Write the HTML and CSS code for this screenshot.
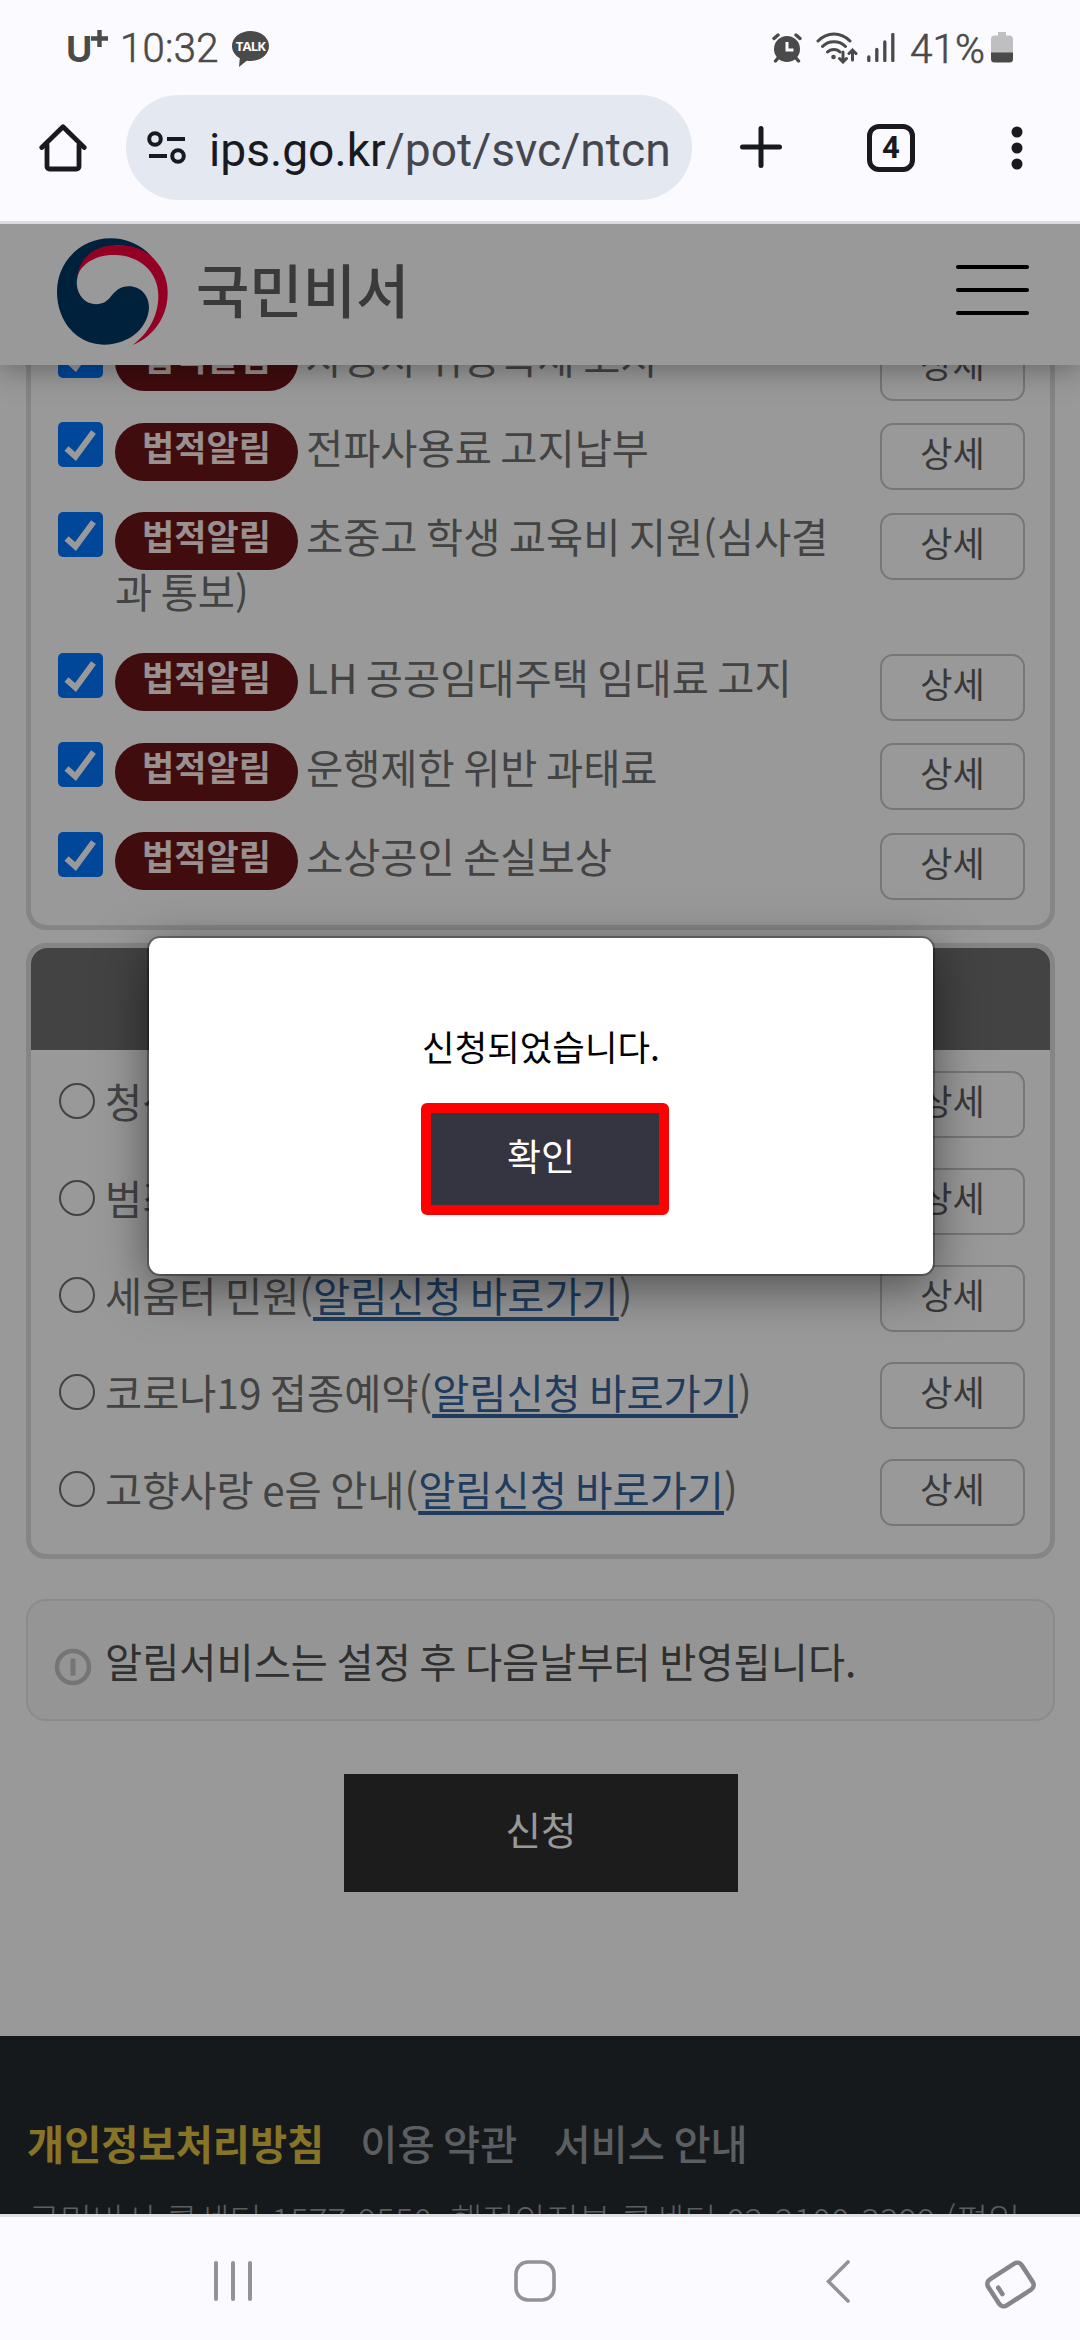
FILE: index.html
```html
<!DOCTYPE html>
<html lang="ko">
<head>
<meta charset="utf-8">
<title>국민비서</title>
<link rel="stylesheet" href="styles.css">
</head>
<body>
<div class="status">
  <span class="carrier">U</span>
  <svg class="carrier-plus" width="17" height="17" viewBox="0 0 17 17"><path d="M8.5 0V17M0 8.5H17" stroke="#4a4a4a" stroke-width="4.4"/></svg>
  <span class="clock">10:32</span>
  <span class="talk">
    <svg width="37" height="36" viewBox="0 0 37 36"><path d="M18.5 0C28.7 0 37 6.6 37 15s-8.3 15-18.500 15c-1.300 0-2.600-.1-3.800-.3L7 36l.8-8.700C3.100 24.600 0 20.100 0 15 0 6.600 8.300 0 18.500 0Z" fill="#4a4a4a"/></svg>
    <b>TALK</b>
  </span>
  <div class="status-right">
    <svg class="alarm" width="30" height="30" viewBox="0 0 30 30"><g fill="none" stroke="#4a4a4a" stroke-width="3.400" stroke-linecap="round"><path d="M2 5.500L6 2M28 5.500L24 2M6 25L3.500 28M24 25L26.500 28"/></g><circle cx="15" cy="16" r="13" fill="#4a4a4a"/><path d="M15 9V17H21.500" fill="none" stroke="#fafaff" stroke-width="3"/></svg>
    <svg class="wifi" width="42" height="32" viewBox="0 0 42 32"><g fill="none" stroke="#4a4a4a" stroke-width="3" stroke-linecap="round"><path d="M2 9C11-.5 25-.5 34 9M6.500 14.500C12.500 8 23.500 8 29.500 14.500M11.500 20C15 16.500 21 16.500 24 20"/><path d="M27 20V29.500M23.500 26.500L27 30L30.500 26.500M36.500 28V19M33 21.500L36.500 18L40 21.500"/></g><circle cx="17.500" cy="25" r="2.300" fill="#4a4a4a"/></svg>
    <svg class="signal" width="28" height="29" viewBox="0 0 28 29"><path d="M1.800 24V27.500M9.800 16.500V27.500M17.800 9V27.500M25.800 1.500V27.500" stroke="#4a4a4a" stroke-width="3.300" stroke-linecap="round"/></svg>
    <span class="percent">41%</span>
    <svg class="battery" width="22" height="31" viewBox="0 0 22 31"><path d="M7 0h8v3.500h3.500A3.500 3.500 0 0 1 22 7v14H0V7a3.500 3.500 0 0 1 3.500-3.500H7Z" fill="#bfbfc1"/><path d="M0 20.500H22V27a3.500 3.500 0 0 1-3.500 3.500h-15A3.500 3.500 0 0 1 0 27Z" fill="#4a4a4a"/></svg>
  </div>
</div>
<div class="toolbar">
  <svg class="home" width="48" height="48" viewBox="0 0 48 48"><g fill="none" stroke="#191a1f" stroke-width="4.800" stroke-linejoin="round" stroke-linecap="round"><path d="M8 21V42.500a2.500 2.500 0 0 0 2.500 2.500h27a2.500 2.500 0 0 0 2.500-2.500V21"/><path d="M2.800 23.500L24 2.800L45.200 23.500"/></g></svg>
  <div class="url">
    <svg class="tune" width="40" height="34" viewBox="0 0 40 34"><g fill="none" stroke="#191a1f" stroke-width="4"><circle cx="8" cy="8" r="5.800"/><circle cx="31" cy="25" r="5.800"/><path d="M20 8H38M2 25H20"/></g></svg>
    <span class="address"><b>ips.go.kr</b>/pot/svc/ntcn/</span>
  </div>
  <svg class="plus" width="42" height="42" viewBox="0 0 42 42"><path d="M21 2.500V39.500M2.500 21H39.500" stroke="#191a1f" stroke-width="5" stroke-linecap="round"/></svg>
  <div class="tabs">4</div>
  <svg class="dots" width="12" height="44" viewBox="0 0 12 44"><g fill="#191a1f"><circle cx="6" cy="6" r="5.500"/><circle cx="6" cy="22" r="5.500"/><circle cx="6" cy="38" r="5.500"/></g></svg>
</div>

<main class="page">
  <header class="site-header">
    <svg class="emblem" width="111" height="107" viewBox="167 53 321 322" preserveAspectRatio="none">
      <path fill="#003764" d="M440 108C410 72 365 54 322 54C235 54 167 125 167 215C167 305 225 374 303 374C378 374 433 320 433 260C433 225 408 198 375 198C350 198 335 212 322 230C312 244 300 252 280 252C250 252 226 228 224 190C226 130 270 80 335 76C380 74 415 90 440 108Z"/>
      <path fill="#f5003c" d="M226 168C233 112 275 76 335 75C385 73 420 88 440 108C470 138 488 175 487 220C487 290 445 352 385 375C432 340 461 285 460 225C460 155 405 105 335 104C285 103 240 125 226 168Z"/>
    </svg>
    <span class="brand">국민비서</span>
    <button class="menu" aria-label="메뉴"><i></i><i></i><i></i></button>
  </header>

  <section class="card card-legal">
    <div class="row"><span class="check"><svg viewBox="0 0 45 45"><path d="M8.500 26.500L17.500 34.500L35.500 10" fill="none" stroke="#fff" stroke-width="6"/></svg></span><p><em>법적알림</em>자동차 취등록세 고지</p><button class="detail">상세</button></div>
    <div class="row"><span class="check"><svg viewBox="0 0 45 45"><path d="M8.500 26.500L17.500 34.500L35.500 10" fill="none" stroke="#fff" stroke-width="6"/></svg></span><p><em>법적알림</em>전파사용료 고지납부</p><button class="detail">상세</button></div>
    <div class="row two-line"><span class="check"><svg viewBox="0 0 45 45"><path d="M8.500 26.500L17.500 34.500L35.500 10" fill="none" stroke="#fff" stroke-width="6"/></svg></span><p><em>법적알림</em>초중고 학생 교육비 지원(심사결과 통보)</p><button class="detail">상세</button></div>
    <div class="row"><span class="check"><svg viewBox="0 0 45 45"><path d="M8.500 26.500L17.500 34.500L35.500 10" fill="none" stroke="#fff" stroke-width="6"/></svg></span><p><em>법적알림</em>LH 공공임대주택 임대료 고지</p><button class="detail">상세</button></div>
    <div class="row"><span class="check"><svg viewBox="0 0 45 45"><path d="M8.500 26.500L17.500 34.500L35.500 10" fill="none" stroke="#fff" stroke-width="6"/></svg></span><p><em>법적알림</em>운행제한 위반 과태료</p><button class="detail">상세</button></div>
    <div class="row"><span class="check"><svg viewBox="0 0 45 45"><path d="M8.500 26.500L17.500 34.500L35.500 10" fill="none" stroke="#fff" stroke-width="6"/></svg></span><p><em>법적알림</em>소상공인 손실보상</p><button class="detail">상세</button></div>
  </section>

  <section class="card card-links">
    <div class="card-title"></div>
    <div class="radio-list">
      <div class="row"><span class="radio"></span><p>청산</p><button class="detail">상세</button></div>
      <div class="row"><span class="radio"></span><p>범죄</p><button class="detail">상세</button></div>
      <div class="row"><span class="radio"></span><p>세움터 민원(<a>알림신청 바로가기</a>)</p><button class="detail">상세</button></div>
      <div class="row"><span class="radio"></span><p>코로나19 접종예약(<a>알림신청 바로가기</a>)</p><button class="detail">상세</button></div>
      <div class="row"><span class="radio"></span><p>고향사랑 e음 안내(<a>알림신청 바로가기</a>)</p><button class="detail">상세</button></div>
    </div>
  </section>

  <div class="notice">
    <svg width="38" height="38" viewBox="0 0 38 38"><circle cx="19" cy="19" r="16" fill="none" stroke="#c4c4c4" stroke-width="4.500"/><path d="M19 10.500V27.500" stroke="#c4c4c4" stroke-width="5"/></svg>
    <span>알림서비스는 설정 후 다음날부터 반영됩니다.</span>
  </div>
  <button class="submit">신청</button>

  <footer class="site-footer">
    <nav><b>개인정보처리방침</b><span>이용 약관</span><span>서비스 안내</span></nav>
    <p>국민비서 콜센터 1577-9550, 행정안전부 콜센터 02-2100-3399 (평일</p>
  </footer>

  <div class="dim"></div>
  <div class="modal">
    <p>신청되었습니다.</p>
    <button class="confirm">확인</button>
  </div>
</main>

<div class="navbar">
  <svg class="recents" width="38" height="40" viewBox="0 0 38 40"><path d="M2 2V38M19 2V38M36 2V38" stroke="#939396" stroke-width="4" stroke-linecap="round"/></svg>
  <svg class="homekey" width="42" height="42" viewBox="0 0 42 42"><rect x="2" y="2" width="38" height="38" rx="12" fill="none" stroke="#939396" stroke-width="3.600"/></svg>
  <svg class="back" width="25" height="43" viewBox="0 0 25 43"><path d="M22 2L2.500 21.500L22 41" fill="none" stroke="#939396" stroke-width="3.600" stroke-linecap="round"/></svg>
  <svg class="cardkey" width="51" height="49" viewBox="0 0 51 49"><g transform="rotate(-33 25.500 24.500)" fill="none" stroke="#868688"><rect x="5.500" y="9" width="40" height="31" rx="5.500" stroke-width="4.600"/><path d="M13.500 20.500V28" stroke-width="4.600" stroke-linecap="round"/></g></svg>
</div>
</body>
</html>
```

FILE: styles.css
```css
* { box-sizing: border-box; }
body {
  margin: 0;
  width: 1080px;
  height: 2340px;
  display: flex;
  flex-direction: column;
  overflow: hidden;
  background: #fafaff;
  font-family: "Noto Sans CJK KR", sans-serif;
}
p { margin: 0; }
button { font: inherit; padding: 0; border: 0; background: none; }
svg { display: block; flex: none; }

/* status bar */
.status {
  height: 95px;
  flex: none;
  display: flex;
  align-items: flex-start;
  padding: 0 67px 0 66px;
  color: #4a4a4a;
  white-space: nowrap;
}
.carrier { font: 700 36px/36px Inter, sans-serif; margin-top: 31px; width: 25px; }
.carrier-plus { margin-top: 30px; }
.clock { font: 300 40px/40px Roboto, sans-serif; letter-spacing: .3px; margin: 29px 0 0 12px; width: 99px; -webkit-text-stroke: .6px #4a4a4a; }
.talk { margin: 31px 0 0 13px; display: grid; }
.talk svg, .talk b { grid-area: 1 / 1; }
.talk b { font: 700 13px/31px "Open Sans", sans-serif; color: #fafaff; text-align: center; letter-spacing: -.8px; }
.status-right { margin-left: auto; display: flex; align-items: flex-start; }
.alarm { margin-top: 33px; }
.wifi { margin: 32px 0 0 14px; }
.signal { margin: 33px 0 0 9px; }
.percent { font: 300 40.500px/40px Roboto, sans-serif; letter-spacing: 0; margin: 29px 0 0 15px; width: 77px; -webkit-text-stroke: .6px #4a4a4a; }
.battery { margin: 32px 0 0 4px; }

/* browser toolbar */
.toolbar {
  height: 129px;
  flex: none;
  display: flex;
  align-items: flex-start;
  padding-left: 39px;
  border-bottom: 3px solid #dcdce2;
}
.home { margin-top: 29px; }
.url {
  width: 566px;
  height: 105px;
  margin-left: 39px;
  border-radius: 53px;
  background: #e4e8f1;
  display: flex;
  align-items: center;
  padding-left: 21px;
}
.address {
  width: 461px;
  margin: 5px 0 0 22px;
  overflow: hidden;
  white-space: nowrap;
  font: 400 46.200px/60px Roboto, sans-serif;
  color: #45474e;
}
.address b { font-weight: 400; color: #191a1f; }
.plus { margin: 31px 0 0 48px; }
.tabs {
  width: 48px;
  height: 48px;
  margin: 29px 0 0 85px;
  border: 5px solid #191a1f;
  border-radius: 12px;
  font: 700 31px/37px Roboto, sans-serif;
  color: #191a1f;
  text-align: center;
}
.dots { margin: 31px 0 0 96px; }

/* web page */
.page {
  position: relative;
  height: 1990px;
  flex: none;
  overflow: hidden;
  background: #fff;
  display: flex;
  flex-direction: column;
}
.site-header {
  position: relative;
  z-index: 1;
  height: 141px;
  flex: none;
  display: flex;
  align-items: flex-start;
  padding: 14px 51px 0 57px;
  background: #fff;
  box-shadow: 0 4px 30px rgba(0, 0, 0, .35);
}
.brand { margin: 8px 0 0 28px; font-size: 58px; line-height: 84px; font-weight: 500; color: #626262; }
.menu { margin: 27px 0 0 auto; width: 73px; display: flex; flex-direction: column; gap: 18.500px; }
.menu i { height: 4.300px; border-radius: 2px; background: #000; }

.card {
  margin: 0 25px 0 26px;
  border: 5px solid #dedede;
  border-radius: 20px;
  flex: none;
}
.card-legal {
  margin-top: -51px;
  height: 616px;
  border-top: 0;
  padding: 19.500px 25px 0 27px;
  display: flex;
  flex-direction: column;
  gap: 22.700px;
}
.row { display: flex; align-items: flex-start; height: 67px; flex: none; color: #707070; }
.two-line { height: 118px; }
.row p { white-space: nowrap; font-size: 40.400px; line-height: 55px; word-spacing: -2.800px; }
.check { width: 45px; height: 45px; margin: -1px 12px 0 0; border-radius: 5px; background: #0075ff; flex: none; }
.card-legal p { width: 745px; white-space: normal; margin-top: -4.500px; }
.card-legal em {
  float: left;
  width: 183px;
  height: 58px;
  margin: 4px 8px -8px 0;
  border-radius: 29px;
  background: #6b1418;
  color: #fff0f0;
  font-size: 35px;
  line-height: 45px;
  font-style: normal;
  font-weight: 700;
  text-align: center;
}
.detail {
  width: 145px;
  height: 67px;
  margin-left: auto;
  border: 2px solid #c6c6c6;
  border-radius: 13px;
  font-size: 35px;
  line-height: 54px;
  padding-bottom: 9px;
  text-align: center;
  color: #606060;
  flex: none;
}
.card-links { margin-top: 13px; }
.card-title { height: 102px; border-radius: 16px 16px 0 0; background: #717171; }
.radio-list { padding: 21px 25px 28px 28px; display: flex; flex-direction: column; gap: 30px; }
.radio { width: 36px; height: 36px; margin: 12px 10px 0 0; border: 2px solid #707070; border-radius: 50%; }
.radio-list p { margin-top: 2px; }
.radio-list a { color: #34659f; text-decoration: underline; text-decoration-thickness: 4px; text-underline-offset: 5px; text-decoration-skip-ink: none; }

.notice {
  margin: 40px 25px 0 26px;
  height: 122px;
  flex: none;
  display: flex;
  align-items: center;
  padding-left: 26px;
  border: 2px solid #e8e8e8;
  border-radius: 20px;
  background: #f8f8f8;
  color: #505050;
  font-size: 40.400px;
  line-height: 55px;
  word-spacing: -2.800px;
}
.notice svg { margin: 14px 13px 0 0; }
.submit { width: 394px; height: 118px; margin: 53px auto 0 344px; flex: none; background: #303030; color: #fff; font-size: 38.500px; padding-bottom: 11px; }
.site-footer { margin-top: 144px; flex: 1; padding: 79px 0 0 27px; background: #232a2f; color: #999ea3; white-space: nowrap; }
.site-footer nav { display: flex; font-size: 40.400px; line-height: 55px; font-weight: 500; gap: 36px; word-spacing: -2.800px; }
.site-footer b { color: #e1c141; font-weight: 700; }
.site-footer p { font-size: 34.800px; line-height: 50px; margin: 24px 0 0 1px; font-weight: 300; }

.dim { position: absolute; inset: 0; z-index: 2; background: rgba(0, 0, 0, .4); }
.modal {
  position: absolute;
  z-index: 3;
  left: 149px;
  top: 714px;
  width: 784px;
  height: 336px;
  border-radius: 11px;
  background: #fff;
  box-shadow: 0 0 0 2px rgba(0, 0, 0, .3), 0 12px 50px rgba(0, 0, 0, .5);
  display: flex;
  flex-direction: column;
  align-items: center;
  padding-top: 82px;
}
.modal p { font-size: 35.400px; line-height: 52px; color: #000; }
.confirm { width: 248px; height: 112px; margin: 31px 0 0 7px; border: 10px solid #ff0000; border-radius: 6px; background: #353541; color: #fff; font-size: 37px; line-height: 80px; padding: 0 7px 9px 0; }

/* system navigation */
.navbar {
  flex: 1;
  display: flex;
  align-items: flex-start;
  border-top: 3px solid #e0e0e4;
  padding: 43px 0 0 214px;
}
.recents { margin-top: 1px; }
.homekey { margin-left: 262px; }
.back { margin-left: 270px; }
.cardkey { margin: 0 0 0 134px; }
```
